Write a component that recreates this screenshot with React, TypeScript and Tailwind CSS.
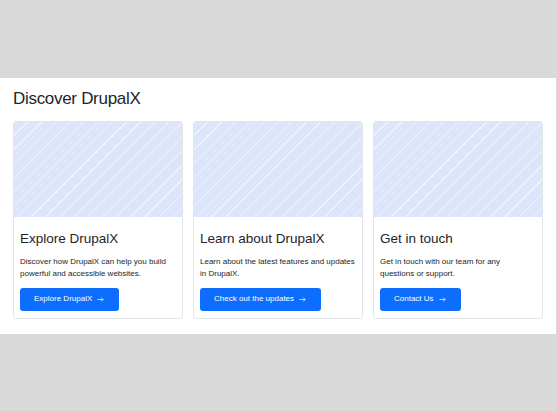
import React from "react";

const cards = [
  {
    title: "Explore DrupalX",
    text: "Discover how DrupalX can help you build powerful and accessible websites.",
    cta: "Explore DrupalX",
  },
  {
    title: "Learn about DrupalX",
    text: "Learn about the latest features and updates in DrupalX.",
    cta: "Check out the updates",
  },
  {
    title: "Get in touch",
    text: "Get in touch with our team for any questions or support.",
    cta: "Contact Us",
  },
];

const App: React.FC = () => {
  return (
    <div className="h-[411px] w-[557px] bg-[#d9d9d9] font-['Liberation_Sans',Arial,sans-serif] text-[#212529]">
      <div className="h-[78px]" />
      {/* Section */}
      <section className="w-[556px] bg-white px-[13px] pt-[9px] pb-[15px]">
        <h2 className="text-[17px] leading-[24px] tracking-[-0.3px] mb-[10px]">Discover DrupalX</h2>
        <div className="grid grid-cols-3 gap-[10px]">
          {cards.map(card => (
            <div key={card.title} className="flex flex-col rounded-[3px] border border-[#e3e5e8] overflow-hidden">
              <div className="h-[95px] bg-[repeating-linear-gradient(135deg,#dde5fb_0px,#dde5fb_9px,#f1f4fe_9px,#f1f4fe_10px)]" />
              <div className="px-[6px] pt-[13px] pb-[7px]">
                <h3 className="text-[13.5px] leading-[18px] mb-[8px]">{card.title}</h3>
                <p className="text-[8px] leading-[12px] mb-[4px]">{card.text}</p>
                <button className="inline-flex items-center gap-[5px] rounded-[3px] bg-[#0d6efd] pl-[14px] pr-[15px] h-[23px] text-[8px] text-white">
                  {card.cta}
                  <svg width="7" height="7" viewBox="0 0 16 16" fill="none" stroke="currentColor" strokeWidth="1.6">
                    <path d="M1 8h13M9.5 3.5 14 8l-4.5 4.5" />
                  </svg>
                </button>
              </div>
            </div>
          ))}
        </div>
      </section>
    </div>
  );
};

export default App;
